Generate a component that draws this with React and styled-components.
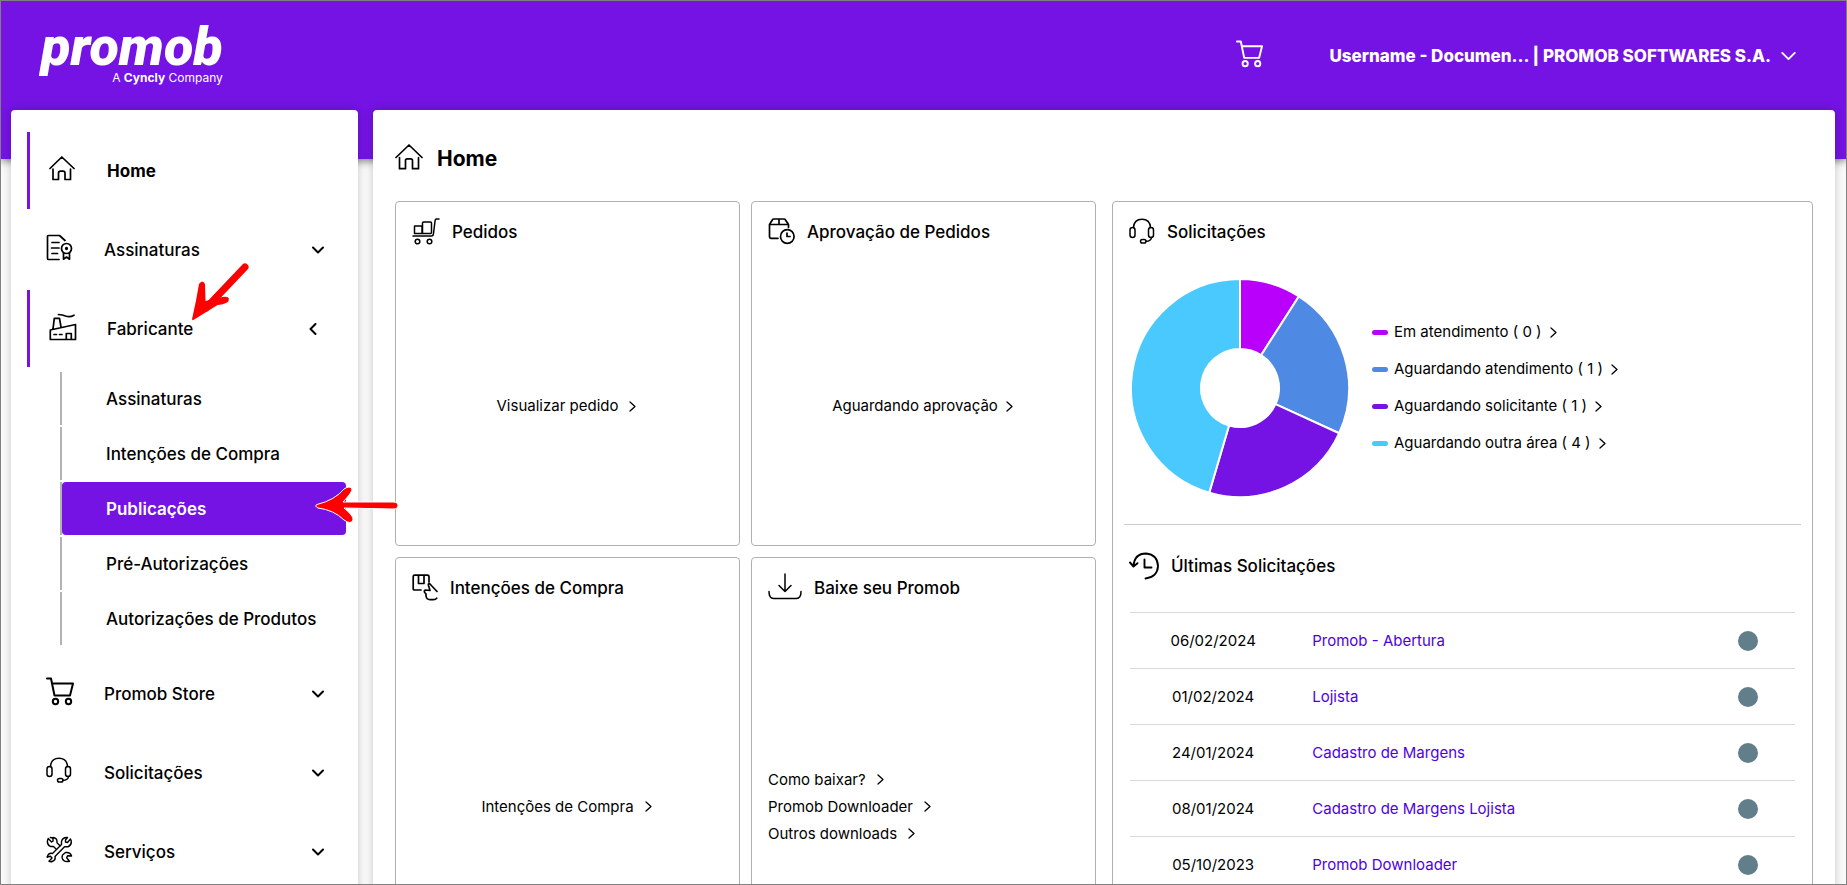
import React from "react";
import styled, { createGlobalStyle, css } from "styled-components";

const PURPLE = "#7413e3";

const GlobalStyle = createGlobalStyle`
  *, *::before, *::after { box-sizing: border-box; }
  body {
    margin: 0;
    background: #fafafa;
    color: #000;
    font-family: Inter, "Liberation Sans", sans-serif;
    font-size: 16px;
    line-height: 20px;
  }
  h1, h2, ul { margin: 0; padding: 0; list-style: none; }
  a { color: inherit; text-decoration: none; }
  button { font: inherit; color: inherit; background: none; border: 0; padding: 0; cursor: pointer; }
`;

/* ---------- page frame ---------- */

const Page = styled.div`
  height: 100vh;
  border: 1px solid #808080;
  overflow: auto;
  scrollbar-width: none;
`;

const Header = styled.header`
  display: flex;
  align-items: flex-start;
  justify-content: space-between;
  height: 158px;
  padding: 22px 50px 0 40px;
  background: ${PURPLE};
  color: #fff;
  box-shadow: 0 2px 8px rgba(0, 0, 0, 0.5);
`;

const Brand = styled.a`
  display: flex;
  flex-direction: column;
  align-items: flex-end;
`;

const BrandName = styled.span`
  font: italic 900 54px/48px Roboto, "Liberation Sans", sans-serif;
`;

const BrandTag = styled.span`
  font-size: 12px;
  line-height: 14px;
`;

const HeaderActions = styled.div`
  display: flex;
  align-items: center;
  gap: 66px;
  padding-top: 17px;
`;

const IconButton = styled.button`
  display: flex;
`;

const UserMenu = styled.button`
  display: flex;
  align-items: center;
  gap: 10px;
  padding-top: 4px;
  font-size: 17px;
  font-weight: 800;
`;

const Columns = styled.div`
  display: flex;
  align-items: stretch;
  gap: 15px;
  margin: -49px 11px 0 10px;
  position: relative;
`;

const panel = css`
  background: #fff;
  border-radius: 4px;
  box-shadow: 0 0 10px rgba(0, 0, 0, 0.2);
`;

/* ---------- side menu ---------- */

const Sidebar = styled.nav`
  ${panel}
  flex: 0 0 347px;
  padding: 22px 12px 22px 16px;
`;

const NavList = styled.ul`
  display: flex;
  flex-direction: column;
  gap: 2px;
`;

const NavEntry = styled.button`
  display: flex;
  align-items: center;
  width: 100%;
  height: 77px;
  padding: 0 22px 0 19px;
  border-left: ${(p) => (p.$marked ? `3px solid ${PURPLE}` : "0")};
  font-size: 17px;
  font-weight: ${(p) => (p.$bold ? 700 : 500)};
  text-align: left;
`;

const NavIcon = styled.span`
  display: flex;
  flex: 0 0 58px;
  padding-bottom: 4px;
`;

const NavLabel = styled.span`
  flex: 1;
`;

const SubList = styled.ul`
  display: flex;
  flex-direction: column;
  gap: 2px;
  padding: 5px 0 8px 33px;
`;

const SubItem = styled.li`
  border-left: 2px solid #b3b3b3;
`;

const SubLink = styled.a`
  display: flex;
  align-items: center;
  height: 53px;
  padding-left: 44px;
  border-radius: 4px;
  font-size: 17px;
  font-weight: ${(p) => (p.$current ? 600 : 500)};
  background: ${(p) => (p.$current ? PURPLE : "transparent")};
  color: ${(p) => (p.$current ? "#fff" : "#000")};
`;

/* ---------- content ---------- */

const Main = styled.main`
  ${panel}
  flex: 1;
  min-width: 0;
  padding: 32px 22px;
`;

const PageTitle = styled.h1`
  display: flex;
  align-items: center;
  gap: 14px;
  height: 34px;
  margin-bottom: 25px;
  font-size: 21px;
  font-weight: 700;
`;

const Dashboard = styled.div`
  display: grid;
  grid-template-columns: minmax(0, 1fr) minmax(0, 1fr);
  gap: 16px;
`;

const Tiles = styled.div`
  display: grid;
  grid-template-columns: minmax(0, 1fr) minmax(0, 1fr);
  grid-template-rows: minmax(345px, auto) minmax(434px, auto);
  gap: 11px;
`;

const Card = styled.section`
  display: flex;
  flex-direction: column;
  border: 1px solid #b0b0b0;
  border-radius: 4px;
`;

const CardTitle = styled.h2`
  display: flex;
  align-items: center;
  gap: 12px;
  height: ${(p) => (p.$tall ? 82 : 60)}px;
  padding: 0 16px;
  font-size: 17px;
  font-weight: 500;
`;

const CardBody = styled.div`
  display: flex;
  flex: 1;
  flex-direction: column;
  align-items: ${(p) => (p.$start ? "flex-start" : "center")};
  justify-content: center;
  gap: 7px;
  padding: 5px 18px 0 16px;
`;

const MoreLink = styled.a`
  display: inline-flex;
  align-items: center;
  gap: ${(p) => (p.$near ? 8 : 11)}px;
  font-size: 15px;
  line-height: 20px;
`;

const ChartArea = styled.div`
  display: flex;
  align-items: center;
  gap: 22px;
  height: 263px;
  margin: 0 11px;
  padding: 0 0 11px 6px;
  border-bottom: 1px solid #ccc;
`;

const Legend = styled.ul`
  display: flex;
  flex-direction: column;
  gap: 17px;
`;

const LegendItem = styled.li`
  display: flex;
  align-items: center;
  gap: 6px;
`;

const Swatch = styled.span`
  width: 16px;
  height: 5px;
  border-radius: 3px;
  background: ${(p) => p.$color};
`;

const RequestTable = styled.table`
  margin: 5px 17px 0;
  border-collapse: collapse;
  table-layout: fixed;
`;

const RequestRow = styled.tr`
  height: 56px;
  border-top: 1px solid #d9d9d9;
`;

const Cell = styled.td`
  width: ${(p) => p.$width || "auto"};
  padding: 0;
  padding-left: ${(p) => p.$indent || 0}px;
  text-align: ${(p) => p.$align || "left"};
  font-size: 15px;
`;

const RequestLink = styled.a`
  color: #4d00e6;
`;

const Status = styled.span`
  display: block;
  width: 20px;
  height: 20px;
  margin: 0 auto;
  border-radius: 50%;
  background: #627e8b;
`;

/* pointers drawn over the menu */
const Pointer = styled.svg`
  position: absolute;
  left: ${(p) => p.$x}px;
  top: ${(p) => p.$y}px;
  pointer-events: none;
`;

/* ---------- icons ---------- */

const Icon = ({ w, h, sw = 1.5, children }) => (
  <svg width={w} height={h} viewBox={`0 0 ${w} ${h}`} fill="none" stroke="currentColor"
    strokeWidth={sw} strokeLinecap="round" strokeLinejoin="round" aria-hidden="true">
    {children}
  </svg>
);

const HouseIcon = () => (
  <Icon w={28} h={30} sw={1.700}>
    <path d="M1 13.500 14 1l13 12.500M4.500 13.500v11.200h6v-8.200q0-1.700 1.700-1.700h3.600q1.700 0 1.700 1.700v8.200h6V13.500" />
  </Icon>
);
const SmallHouseIcon = () => (
  <Icon w={26} h={25} sw={1.700}>
    <path d="M1 12.500 12.800 1 25 12.500M4 13v10.500h5.500v-6.300q0-2 2-2h2.500q2 0 2 2v6.300h5.500V13" />
  </Icon>
);
const CertificateIcon = () => (
  <Icon w={27} h={27} sw={1.700}>
    <path d="M19 6.500 13.500 1.500H2.500q-1 0-1 1v22q0 1 1 1h10.500M6 8.500h7M5.500 14h7.500M6 19.500h5.500" />
    <circle cx="20.500" cy="14.500" r="5" />
    <circle cx="20.500" cy="14.500" r=".8" fill="currentColor" />
    <path d="M17.500 19v6.200l3-2.200 3 2.200V19" />
  </Icon>
);
const FactoryIcon = () => (
  <Icon w={28} h={28} sw={1.700}>
    <path d="M9.500 1.500q4 .2 7 1.500 4.500 1.500 8.500-.8M4 16 5.300 5.300h5.200L12 14M1.300 17 26.500 11.500V26.500H1.300ZM17.300 26.500V20.500h5v6M5 21.500h2.500M10.500 21.500h2.500" />
  </Icon>
);
const CartIcon = ({ w = 28, h = 29 }) => (
  <svg width={w} height={h} viewBox="0 0 28 29" fill="none" stroke="currentColor" strokeWidth="2"
    strokeLinecap="round" strokeLinejoin="round" aria-hidden="true">
    <path d="M1 1.500h4l3.500 17h15.500L27 6.500H6" />
    <circle cx="9.500" cy="24.500" r="2.700" />
    <circle cx="22.500" cy="24.500" r="2.700" />
  </svg>
);
const HeadsetIcon = () => (
  <Icon w={26} h={28}>
    <path d="M4.500 9.500Q5 1.200 13 1.200t8.500 8.300" />
    <rect x="1" y="9.500" width="5" height="10" rx="2.500" />
    <rect x="19.500" y="9.500" width="5" height="10" rx="2.500" />
    <path d="M22.500 19.500q-.5 3.800-5.500 3.800" />
    <rect x="11.500" y="21.500" width="5.500" height="3.600" rx="1.800" />
  </Icon>
);
const WrenchesIcon = () => (
  <Icon w={27} h={27} sw={1.400}>
    <path d="M2.200 2.500 5.500 6l1.500-.8L7 2.500Q5.500 1.400 4.300 1.500M7 1.500q4.500.5 4 5.300l3 3M2 3q-2 5 2.500 7.500h3l2.500 2.500" />
    <path d="M24.500 3 21.500 6.500 19.500 6 19.500 4 21.500 1.500Q16.500 1 15.500 5.500V8.500L6.500 17.500Q2.500 16.500 1.300 21M24.500 3q2.500 5-2.500 7.800h-3.500L9 20.500q1 4-3 5" />
    <path d="M1.300 21 4.500 20.300 6 22 3 25.300Q5 26 6 25.500M16.500 19l3-2.500q5-.5 6 3.500l-4-.2-.8 2 2.800 3.500q-6.500 1.200-7.500-4Z" />
  </Icon>
);
const TrolleyIcon = () => (
  <Icon w={28} h={29} sw={1.500}>
    <path d="M27 1h-2.500q-1.200 0-1.400 1.500L21.500 15.500q-.2 2.500-2 2.500H1" />
    <path d="M2.500 8h7.500v7.500H2.500ZM11.500 4h7q1 0 1 1v9.500q0 1-1 1h-8V5q0-1 1-1Z" />
    <circle cx="5.500" cy="23.500" r="2.300" />
    <circle cx="17.500" cy="23.500" r="2.300" />
  </Icon>
);
const BoxClockIcon = () => (
  <Icon w={27} h={29} sw={1.700}>
    <path d="M1.500 6.500 4.300 2q.5-1 1.500-1H16q1 0 1.500 1L20.500 6.500ZM11 1v5.500M1.500 6.500v12.300q0 1.500 1.500 1.500h7M20.500 6.500v3" />
    <circle cx="19.300" cy="18.500" r="6.800" />
    <path d="M19 15v3.500h3" />
  </Icon>
);
const HandBoxIcon = () => (
  <Icon w={26} h={29} sw={1.700}>
    <path d="M9 16H2.500q-1.300 0-1.300-1.300V2.500q0-1.300 1.300-1.300H15.500q1.500 0 1.500 1.300V8M6.500 1.200v8.300h5.500V1.200" />
    <path d="M25 17.500 17.500 9.500q-1.500 0-1 2l1.500 5-4.500-.5q-1.800.5-.8 2.500l1.300 1.500V22q.5 3.500 4 3.700h3.500q2 0 3.200-1.500" />
  </Icon>
);
const DownloadIcon = () => (
  <Icon w={34} h={30} sw={1.500}>
    <path d="M17 1v17.500M11 12.500l6 6 6-6M1 18.500q0 7 4.500 7h23q4.500 0 4.500-7" />
  </Icon>
);
const HistoryIcon = () => (
  <Icon w={30} h={28} sw={1.900}>
    <path d="M1 10.500 4.500 14.500 8.500 11.200M4.500 14Q5.500 1.500 17 1.500q11.500 1 12 12.500-.5 11-12.500 12.500M15.500 7.500v8h7" />
  </Icon>
);
const ChevronDown = ({ size = 12, sw = 2 }) => (
  <svg width={size} height={(size * 2) / 3} viewBox="0 0 12 8" fill="none" stroke="currentColor"
    strokeWidth={sw} strokeLinecap="round" strokeLinejoin="round" aria-hidden="true">
    <path d="M1 1.500 6 6.500l5-5" />
  </svg>
);
const ChevronLeft = () => (
  <Icon w={15} h={12} sw={2}>
    <path d="M6.500 1 1.500 6l5 5" />
  </Icon>
);
const ChevronRight = () => (
  <Icon w={7} h={11} sw={1.300}>
    <path d="M1 1l5 4.500L1 10" />
  </Icon>
);

/* ---------- data ---------- */

const SLICES = [
  { label: "Em atendimento ( 0 )", share: 1, color: "#b900fb" },
  { label: "Aguardando atendimento ( 1 )", share: 2.5, color: "#4e8ae4" },
  { label: "Aguardando solicitante ( 1 )", share: 2.5, color: PURPLE },
  { label: "Aguardando outra área ( 4 )", share: 5, color: "#4ac9ff" },
];

const REQUESTS = [
  ["06/02/2024", "Promob - Abertura"],
  ["01/02/2024", "Lojista"],
  ["24/01/2024", "Cadastro de Margens"],
  ["08/01/2024", "Cadastro de Margens Lojista"],
  ["05/10/2023", "Promob Downloader"],
];

const MAKER_LINKS = [
  "Assinaturas",
  "Intenções de Compra",
  "Publicações",
  "Pré-Autorizações",
  "Autorizações de Produtos",
];

const Donut = () => {
  const total = SLICES.reduce((sum, s) => sum + s.share, 0);
  const at = (r, f) => {
    const a = f * 2 * Math.PI;
    return `${110 + r * Math.sin(a)} ${110 - r * Math.cos(a)}`;
  };
  let from = 0;
  return (
    <svg width="220" height="220" viewBox="0 0 220 220" role="img" aria-label="Solicitações">
      {SLICES.map((s) => {
        const a = from / total;
        from += s.share;
        const b = from / total;
        return (
          <path key={s.label} fill={s.color} stroke="#fff" strokeWidth="2" strokeLinejoin="round"
            d={`M${at(109, a)}A109 109 0 0 1 ${at(109, b)}L${at(39, b)}A39 39 0 0 0 ${at(39, a)}Z`} />
        );
      })}
    </svg>
  );
};

const More = ({ children, near }) => (
  <MoreLink href="#" $near={near}>
    {children}
    <ChevronRight />
  </MoreLink>
);

const MenuEntry = ({ icon, label, open }) => (
  <NavEntry type="button" $marked={open} aria-expanded={!!open}>
    <NavIcon>{icon}</NavIcon>
    <NavLabel>{label}</NavLabel>
    {open ? <ChevronLeft /> : <ChevronDown />}
  </NavEntry>
);

export default function App() {
  return (
    <Page>
      <GlobalStyle />
      <Header>
        <Brand href="#">
          <BrandName>promob</BrandName>
          <BrandTag>A <b>Cyncly</b> Company</BrandTag>
        </Brand>
        <HeaderActions>
          <IconButton type="button" aria-label="Promob Store">
            <CartIcon w={27} h={28} />
          </IconButton>
          <UserMenu type="button">
            Username - Documen... | PROMOB SOFTWARES S.A.
            <ChevronDown size={15} sw={1.500} />
          </UserMenu>
        </HeaderActions>
      </Header>

      <Columns>
        <Sidebar>
          <NavList>
            <li>
              <NavEntry as="a" href="#" $marked $bold>
                <NavIcon><SmallHouseIcon /></NavIcon>
                <NavLabel>Home</NavLabel>
              </NavEntry>
            </li>
            <li><MenuEntry icon={<CertificateIcon />} label="Assinaturas" /></li>
            <li>
              <MenuEntry icon={<FactoryIcon />} label="Fabricante" open />
              <SubList>
                {MAKER_LINKS.map((label) => (
                  <SubItem key={label}>
                    <SubLink href="#" $current={label === "Publicações"}>{label}</SubLink>
                  </SubItem>
                ))}
              </SubList>
            </li>
            <li><MenuEntry icon={<CartIcon />} label="Promob Store" /></li>
            <li><MenuEntry icon={<HeadsetIcon />} label="Solicitações" /></li>
            <li><MenuEntry icon={<WrenchesIcon />} label="Serviços" /></li>
          </NavList>
        </Sidebar>

        <Main>
          <PageTitle><HouseIcon />Home</PageTitle>
          <Dashboard>
            <Tiles>
              <Card>
                <CardTitle><TrolleyIcon />Pedidos</CardTitle>
                <CardBody><More>Visualizar pedido</More></CardBody>
              </Card>
              <Card>
                <CardTitle><BoxClockIcon />Aprovação de Pedidos</CardTitle>
                <CardBody><More near>Aguardando aprovação</More></CardBody>
              </Card>
              <Card>
                <CardTitle><HandBoxIcon />Intenções de Compra</CardTitle>
                <CardBody><More>Intenções de Compra</More></CardBody>
              </Card>
              <Card>
                <CardTitle><DownloadIcon />Baixe seu Promob</CardTitle>
                <CardBody $start>
                  <More>Como baixar?</More>
                  <More>Promob Downloader</More>
                  <More>Outros downloads</More>
                </CardBody>
              </Card>
            </Tiles>

            <Card>
              <CardTitle><HeadsetIcon />Solicitações</CardTitle>
              <ChartArea>
                <Donut />
                <Legend>
                  {SLICES.map((s) => (
                    <LegendItem key={s.label}>
                      <Swatch $color={s.color} />
                      <More near>{s.label}</More>
                    </LegendItem>
                  ))}
                </Legend>
              </ChartArea>
              <CardTitle $tall><HistoryIcon />Últimas Solicitações</CardTitle>
              <RequestTable>
                <tbody>
                  {REQUESTS.map(([date, title]) => (
                    <RequestRow key={date}>
                      <Cell $width="25%" $align="center">{date}</Cell>
                      <Cell $indent={16}><RequestLink href="#">{title}</RequestLink></Cell>
                      <Cell $width="14%"><Status /></Cell>
                    </RequestRow>
                  ))}
                </tbody>
              </RequestTable>
            </Card>
          </Dashboard>
        </Main>

        <Pointer $x={175} $y={148} width="70" height="70" viewBox="0 0 70 70">
          <path d="M59 9 20 50" stroke="red" strokeWidth="7" strokeLinecap="round" />
          <path d="M13 26q3.500-5 6 0l.5 17 17-4q8-1 6 4-2 3-11 4L9 61q-4 3-2.500-2Q10 44 13 26Z" fill="red" />
        </Pointer>
        <Pointer $x={302} $y={374} width="90" height="46" viewBox="0 0 90 46">
          <path d="M4 20.500Q22 16 31 5q6-4 8 0 .5 3-9 13h50q5 0 5 3.500T80 25L31 24q10 8 9 12-2 5-9 0Q21 26 5 24q-4-2-1-3.500Z"
            fill="red" stroke="#fff" strokeWidth="1" />
        </Pointer>
      </Columns>
    </Page>
  );
}
